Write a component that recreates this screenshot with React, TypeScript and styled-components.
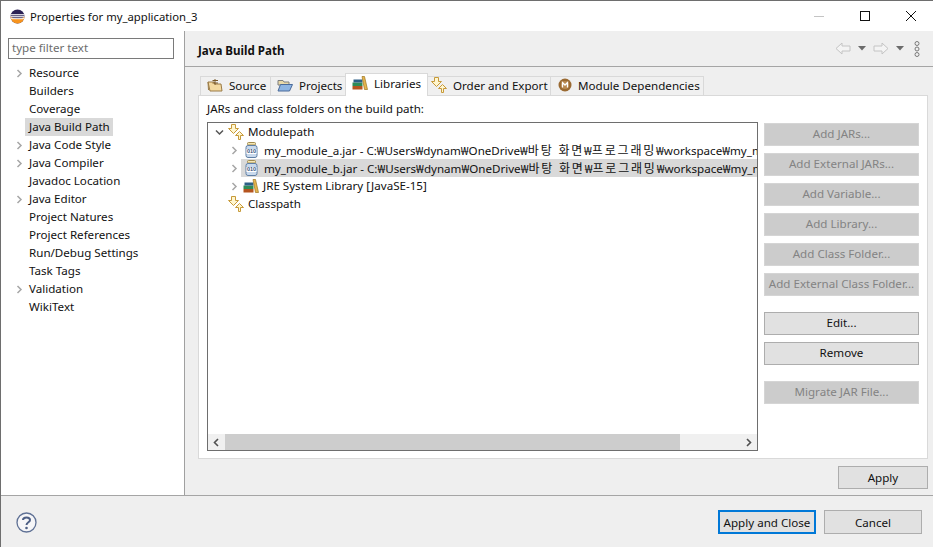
import styled, { createGlobalStyle } from 'styled-components';
import { ReactNode } from 'react';

const GlobalStyle = createGlobalStyle`
  html, body {
    margin: 0;
    padding: 0;
    background: #fff;
  }
  * {
    box-sizing: border-box;
  }
`;

const Window = styled.div`
  width: 933px;
  height: 547px;
  display: flex;
  flex-direction: column;
  overflow: hidden;
  background: #fff;
  border-top: 1px solid #6e6e6e;
  border-left: 1px solid #6e6e6e;
  font-family: 'Noto Sans', 'Noto Sans CJK KR', sans-serif;
  font-size: 11.6px;
  color: #111;
`;

const TitleBar = styled.div`
  height: 30px;
  display: flex;
  align-items: center;
  padding-left: 9px;
  margin-right: -1px;
  gap: 5px;
`;

const TitleText = styled.span`
  flex: 1;
  font-size: 11.3px;
`;

const WindowButton = styled.div`
  width: 46px;
  height: 30px;
  display: flex;
  align-items: center;
  justify-content: center;
  margin-left: -5px;
`;

const Body = styled.div`
  height: 464px;
  display: flex;
`;

const Sidebar = styled.div`
  width: 184px;
  flex: none;
  background: #fff;
  border-right: 1px solid #a0a0a0;
  padding: 7px 0 0 7px;
`;

const FilterInput = styled.div`
  width: 166px;
  height: 21px;
  border: 1px solid #7a7a7a;
  padding-left: 3px;
  line-height: 18px;
  color: #6d6d6d;
  margin-bottom: 5px;
`;

const NavRow = styled.div`
  height: 18px;
  display: flex;
  align-items: center;
`;

const NavArrowSlot = styled.div`
  width: 17px;
  display: flex;
  justify-content: center;
  padding-left: 5px;
`;

const NavLabel = styled.span<{ $selected?: boolean }>`
  padding: 0 3px 0 4px;
  line-height: 18px;
  background: ${(props) => (props.$selected ? '#d9d9d9' : 'transparent')};
`;

const Main = styled.div`
  flex: 1;
  background: #efefef;
  display: flex;
  flex-direction: column;
`;

const PageHeader = styled.div`
  height: 36px;
  border-bottom: 1px solid #a5a5a5;
  display: flex;
  align-items: center;
  padding: 0 13px 0 13px;
`;

const PageTitle = styled.span`
  flex: 1;
  font-weight: 700;
  padding-top: 3px;
`;

const HistoryIcons = styled.div`
  display: flex;
  align-items: center;
  gap: 7px;
`;

const MenuSlot = styled.div`
  display: flex;
  margin-left: 3px;
`;

const Content = styled.div`
  flex: 1;
  display: flex;
  flex-direction: column;
  padding: 6px 5px 0 13px;
`;

const TabBar = styled.div`
  height: 22px;
  display: flex;
  align-items: flex-start;
  padding-left: 2px;
  position: relative;
  z-index: 1;
`;

const Tab = styled.div<{ $active?: boolean; $width: number; $inset: number }>`
  width: ${(props) => props.$width}px;
  height: ${(props) => (props.$active ? '23px' : '19px')};
  margin-top: ${(props) => (props.$active ? '0' : '3px')};
  display: flex;
  align-items: center;
  gap: 6px;
  padding: 0 0 ${(props) => (props.$active ? '4px' : '2px')} ${(props) => props.$inset}px;
  white-space: nowrap;
  background: ${(props) => (props.$active ? '#fff' : '#f0f0f0')};
  border: 1px solid #d9d9d9;
  border-bottom: none;
  margin-right: -1px;
`;

const TabPanel = styled.div`
  height: 364px;
  width: 730px;
  background: #fff;
  border: 1px solid #d9d9d9;
  padding: 6px 8px 0 8px;
`;

const PanelLabel = styled.div`
  height: 20px;
  line-height: 14px;
`;

const PanelBody = styled.div`
  display: flex;
  gap: 6px;
`;

const TreeBox = styled.div`
  width: 551px;
  height: 329px;
  flex: none;
  border: 1px solid #6e6e6e;
  display: flex;
  flex-direction: column;
  background: #fff;
`;

const TreeRows = styled.div`
  flex: 1;
  overflow: hidden;
`;

const TreeRow = styled.div<{ $depth: number }>`
  height: 18px;
  display: flex;
  align-items: center;
  padding-left: ${(props) => 4 + props.$depth * 15}px;
  white-space: nowrap;
`;

const TreeArrowSlot = styled.div`
  width: 14px;
  flex: none;
  display: flex;
  justify-content: center;
`;

const TreeCell = styled.div<{ $selected?: boolean }>`
  flex: 1;
  min-width: 0;
  height: 18px;
  display: flex;
  align-items: center;
  gap: 4px;
  padding: 0 0 1px 2px;
  overflow: hidden;
  background: ${(props) => (props.$selected ? '#d9d9d9' : 'transparent')};

  svg {
    flex: none;
  }
`;

const Hangul = styled.span`
  font-size: 12px;
  letter-spacing: 1.8px;
`;

const HScrollBar = styled.div`
  height: 16px;
  flex: none;
  background: #f0f0f0;
  display: flex;
  align-items: center;
  justify-content: space-between;
  position: relative;
  padding: 0 4px;

  svg {
    position: relative;
  }
`;

const HScrollThumb = styled.div`
  position: absolute;
  left: 17px;
  top: 0;
  width: 455px;
  height: 16px;
  background: #cdcdcd;
`;

const ButtonColumn = styled.div`
  width: 155px;
  display: flex;
  flex-direction: column;
  padding-top: 1px;
`;

const SideButton = styled.div<{ $disabled?: boolean; $gapTop?: number }>`
  height: 23px;
  margin-bottom: 7px;
  margin-top: ${(props) => props.$gapTop ?? 0}px;
  padding-bottom: 2px;
  display: flex;
  align-items: center;
  justify-content: center;
  white-space: nowrap;
  border: 1px solid;
  background: ${(props) => (props.$disabled ? '#cccccc' : '#e1e1e1')};
  border-color: ${(props) => (props.$disabled ? '#d5d5d5' : '#adadad')};
  color: ${(props) => (props.$disabled ? '#838383' : '#111')};
`;

const ApplyRow = styled.div`
  display: flex;
  justify-content: flex-end;
  padding-top: 7px;
`;

const ApplyButton = styled.div`
  width: 90px;
  height: 23px;
  border: 1px solid #adadad;
  background: #e1e1e1;
  display: flex;
  align-items: center;
  justify-content: center;
`;

const Footer = styled.div`
  flex: 1;
  background: #efefef;
  border-top: 1px solid #a5a5a5;
  display: flex;
  align-items: center;
  padding: 1px 11px 0 15px;
`;

const HelpSlot = styled.div`
  flex: 1;
  display: flex;
`;

const FooterButton = styled.div<{ $primary?: boolean }>`
  width: 98px;
  height: 24px;
  margin-left: ${(props) => (props.$primary ? '0' : '8px')};
  display: flex;
  align-items: center;
  justify-content: center;
  background: #e1e1e1;
  border: ${(props) => (props.$primary ? '2px solid #0078d7' : '1px solid #adadad')};
`;

const JarSvg = styled.svg`
  margin: 0 2px;
`;

const Chevron = ({ open, color = '#a6a6a6' }: { open?: boolean; color?: string }) => (
  <svg width="9" height="9" viewBox="0 0 9 9">
    <path
      d={open ? 'M1 2.5 L4.5 6 L8 2.5' : 'M2.5 1 L6 4.5 L2.5 8'}
      fill="none"
      stroke={color}
      strokeWidth="1.5"
    />
  </svg>
);

const EclipseLogo = () => (
  <svg width="15" height="15" viewBox="0 0 15 15">
    <circle cx="7.5" cy="7.5" r="7" fill="#2c2255" />
    <path d="M0.5 7.5 A7 7 0 0 0 14.5 7.5 A9 7 0 0 1 0.5 7.5" fill="#f7941e" />
    <rect x="0.5" y="5.2" width="14" height="1.1" fill="#fff" />
    <rect x="0.5" y="7.2" width="14" height="1.1" fill="#fff" />
    <rect x="1" y="9.2" width="13" height="1" fill="#fff" />
  </svg>
);

const SourceIcon = () => (
  <svg width="16" height="14" viewBox="0 0 16 14">
    <path d="M1 4 L7 4 L8 6 L14 6 L15 13 L3 13 Z" fill="#f3d9a0" stroke="#9a7b46" />
    <path d="M8 1 V7 M5.5 2.5 H11 M5.5 5 H11" stroke="#7a5a2a" fill="none" />
    <path d="M1 4 L1.5 12" stroke="#9a7b46" fill="none" />
  </svg>
);

const FolderIcon = () => (
  <svg width="16" height="13" viewBox="0 0 16 13">
    <path d="M1 1.5 H6 L7 3 H12 V6 H1 Z" fill="#e8d8a8" stroke="#7e7e7e" />
    <path d="M1 12 L3.5 5.5 H15.5 L12.5 12 Z" fill="#8db4e2" stroke="#4a6a9a" />
  </svg>
);

const LibraryIcon = () => (
  <svg width="16" height="14" viewBox="0 0 16 14">
    <rect x="0.5" y="10" width="10" height="3.5" fill="#b5541f" />
    <rect x="0.5" y="6.5" width="10" height="3.5" fill="#2e8b57" />
    <rect x="1.5" y="3.5" width="9" height="3" fill="#2c5f86" />
    <path d="M10 0.5 L12.5 0.5 L15.5 13.5 L12.5 13.5 Z" fill="#e5b54e" stroke="#9c7420" strokeWidth="0.7" />
  </svg>
);

const OrderIcon = () => (
  <svg width="16" height="16" viewBox="0 0 16 16">
    <path d="M3.5 0.5 H7.5 V4.5 H10.5 L5.5 9.5 L0.5 4.5 H3.5 Z" fill="#fff6cf" stroke="#c79a3a" />
    <path d="M10.5 15.5 V11.5 H7.5 L11.5 7.5 L15.5 11.5 H12.5 V15.5 Z" fill="#fff6cf" stroke="#c79a3a" />
  </svg>
);

const ModuleIcon = () => (
  <svg width="14" height="14" viewBox="0 0 14 14">
    <circle cx="7" cy="7" r="6.5" fill="#9a6a32" />
    <circle cx="7" cy="7" r="4" fill="#b98a52" />
    <path d="M4.5 9.5 V4.5 L7 7 L9.5 4.5 V9.5" fill="none" stroke="#fff" strokeWidth="1.3" />
  </svg>
);

const JarIcon = () => (
  <JarSvg width="13" height="16" viewBox="0 0 13 16">
    <rect x="2.5" y="0.5" width="8" height="2.5" rx="1" fill="#f5e7b5" stroke="#a08a4e" />
    <rect x="1" y="3.5" width="11" height="12" rx="2" fill="#c9d9ec" stroke="#5f7fa5" />
    <rect x="1.5" y="7" width="10" height="5" fill="#fff" />
    <text x="6.5" y="11.4" textAnchor="middle" fontSize="5.5" fontWeight="700" fontFamily="Liberation Sans, sans-serif" fill="#33507a">
      010
    </text>
  </JarSvg>
);

const HistoryArrow = ({ back }: { back?: boolean }) => (
  <svg width="16" height="13" viewBox="0 0 16 13">
    <path
      d={back ? 'M1 6.5 L7 1 V4 H15 V9 H7 V12 Z' : 'M15 6.5 L9 1 V4 H1 V9 H9 V12 Z'}
      fill="#f4f4f4"
      stroke="#c4c4c4"
    />
  </svg>
);

const SmallCaret = () => (
  <svg width="8" height="5" viewBox="0 0 8 5">
    <path d="M0 0 H8 L4 4.5 Z" fill="#6b6b6b" />
  </svg>
);

const MenuDots = () => (
  <svg width="6" height="16" viewBox="0 0 6 16">
    <circle cx="3" cy="2.5" r="2" fill="none" stroke="#7a7a7a" />
    <circle cx="3" cy="8" r="2" fill="none" stroke="#7a7a7a" />
    <circle cx="3" cy="13.5" r="2" fill="none" stroke="#7a7a7a" />
  </svg>
);

const HelpIcon = () => (
  <svg width="21" height="21" viewBox="0 0 21 21">
    <circle cx="10.5" cy="10.5" r="9.5" fill="#f6f6f8" stroke="#5f7195" strokeWidth="1.3" />
    <path d="M7 8 C7 4.5 14 4.5 14 8 C14 10.5 10.5 10 10.5 13" fill="none" stroke="#4d5f85" strokeWidth="2" />
    <circle cx="10.5" cy="16" r="1.3" fill="#4d5f85" />
  </svg>
);

const JarLabel = ({ name }: { name: string }) => (
  <span>
    {name} - C:₩Users₩dynam₩OneDrive₩<Hangul>바탕 화면</Hangul>₩<Hangul>프로그래밍</Hangul>₩workspace₩my_module
  </span>
);

const navItems: { label: string; arrow?: boolean; selected?: boolean }[] = [
  { label: 'Resource', arrow: true },
  { label: 'Builders' },
  { label: 'Coverage' },
  { label: 'Java Build Path', selected: true },
  { label: 'Java Code Style', arrow: true },
  { label: 'Java Compiler', arrow: true },
  { label: 'Javadoc Location' },
  { label: 'Java Editor', arrow: true },
  { label: 'Project Natures' },
  { label: 'Project References' },
  { label: 'Run/Debug Settings' },
  { label: 'Task Tags' },
  { label: 'Validation', arrow: true },
  { label: 'WikiText' },
];

const tabs: { label: string; icon: ReactNode; width: number; inset: number; active?: boolean }[] = [
  { label: 'Source', icon: <SourceIcon />, width: 71, inset: 6 },
  { label: 'Projects', icon: <FolderIcon />, width: 76, inset: 6 },
  { label: 'Libraries', icon: <LibraryIcon />, width: 83, inset: 6, active: true },
  { label: 'Order and Export', icon: <OrderIcon />, width: 124, inset: 3 },
  { label: 'Module Dependencies', icon: <ModuleIcon />, width: 154, inset: 7 },
];

const sideButtons: { label: string; disabled?: boolean; gapTop?: number }[] = [
  { label: 'Add JARs...', disabled: true },
  { label: 'Add External JARs...', disabled: true },
  { label: 'Add Variable...', disabled: true },
  { label: 'Add Library...', disabled: true },
  { label: 'Add Class Folder...', disabled: true },
  { label: 'Add External Class Folder...', disabled: true },
  { label: 'Edit...', gapTop: 9 },
  { label: 'Remove' },
  { label: 'Migrate JAR File...', disabled: true, gapTop: 9 },
];

function App() {
  return (
    <>
      <GlobalStyle />
      <Window>
        <TitleBar>
          <EclipseLogo />
          <TitleText>Properties for my_application_3</TitleText>
          <WindowButton>
            <svg width="10" height="1" viewBox="0 0 10 1">
              <rect width="10" height="1" fill="#c4c4c4" />
            </svg>
          </WindowButton>
          <WindowButton>
            <svg width="10" height="10" viewBox="0 0 10 10">
              <rect x="0.5" y="0.5" width="9" height="9" fill="none" stroke="#111" />
            </svg>
          </WindowButton>
          <WindowButton>
            <svg width="10" height="10" viewBox="0 0 10 10">
              <path d="M0 0 L10 10 M10 0 L0 10" stroke="#111" />
            </svg>
          </WindowButton>
        </TitleBar>
        <Body>
          <Sidebar>
            <FilterInput>type filter text</FilterInput>
            {navItems.map((item) => (
              <NavRow key={item.label}>
                <NavArrowSlot>{item.arrow && <Chevron />}</NavArrowSlot>
                <NavLabel $selected={item.selected}>{item.label}</NavLabel>
              </NavRow>
            ))}
          </Sidebar>
          <Main>
            <PageHeader>
              <PageTitle>Java Build Path</PageTitle>
              <HistoryIcons>
                <HistoryArrow back />
                <SmallCaret />
                <HistoryArrow />
                <SmallCaret />
                <MenuSlot>
                  <MenuDots />
                </MenuSlot>
              </HistoryIcons>
            </PageHeader>
            <Content>
              <TabBar>
                {tabs.map((tab) => (
                  <Tab key={tab.label} $active={tab.active} $width={tab.width} $inset={tab.inset}>
                    {tab.icon}
                    {tab.label}
                  </Tab>
                ))}
              </TabBar>
              <TabPanel>
                <PanelLabel>JARs and class folders on the build path:</PanelLabel>
                <PanelBody>
                  <TreeBox>
                    <TreeRows>
                      <TreeRow $depth={0}>
                        <TreeArrowSlot>
                          <Chevron open color="#555" />
                        </TreeArrowSlot>
                        <TreeCell>
                          <OrderIcon />
                          Modulepath
                        </TreeCell>
                      </TreeRow>
                      <TreeRow $depth={1}>
                        <TreeArrowSlot>
                          <Chevron />
                        </TreeArrowSlot>
                        <TreeCell>
                          <JarIcon />
                          <JarLabel name="my_module_a.jar" />
                        </TreeCell>
                      </TreeRow>
                      <TreeRow $depth={1}>
                        <TreeArrowSlot>
                          <Chevron />
                        </TreeArrowSlot>
                        <TreeCell $selected>
                          <JarIcon />
                          <JarLabel name="my_module_b.jar" />
                        </TreeCell>
                      </TreeRow>
                      <TreeRow $depth={1}>
                        <TreeArrowSlot>
                          <Chevron />
                        </TreeArrowSlot>
                        <TreeCell>
                          <LibraryIcon />
                          JRE System Library [JavaSE-15]
                        </TreeCell>
                      </TreeRow>
                      <TreeRow $depth={0}>
                        <TreeArrowSlot />
                        <TreeCell>
                          <OrderIcon />
                          Classpath
                        </TreeCell>
                      </TreeRow>
                    </TreeRows>
                    <HScrollBar>
                      <HScrollThumb />
                      <svg width="9" height="9" viewBox="0 0 9 9">
                        <path d="M6 1 L2.5 4.5 L6 8" fill="none" stroke="#505050" strokeWidth="1.6" />
                      </svg>
                      <svg width="9" height="9" viewBox="0 0 9 9">
                        <path d="M3 1 L6.5 4.5 L3 8" fill="none" stroke="#505050" strokeWidth="1.6" />
                      </svg>
                    </HScrollBar>
                  </TreeBox>
                  <ButtonColumn>
                    {sideButtons.map((button) => (
                      <SideButton key={button.label} $disabled={button.disabled} $gapTop={button.gapTop}>
                        {button.label}
                      </SideButton>
                    ))}
                  </ButtonColumn>
                </PanelBody>
              </TabPanel>
              <ApplyRow>
                <ApplyButton>Apply</ApplyButton>
              </ApplyRow>
            </Content>
          </Main>
        </Body>
        <Footer>
          <HelpSlot>
            <HelpIcon />
          </HelpSlot>
          <FooterButton $primary>Apply and Close</FooterButton>
          <FooterButton>Cancel</FooterButton>
        </Footer>
      </Window>
    </>
  );
}

export default App;
